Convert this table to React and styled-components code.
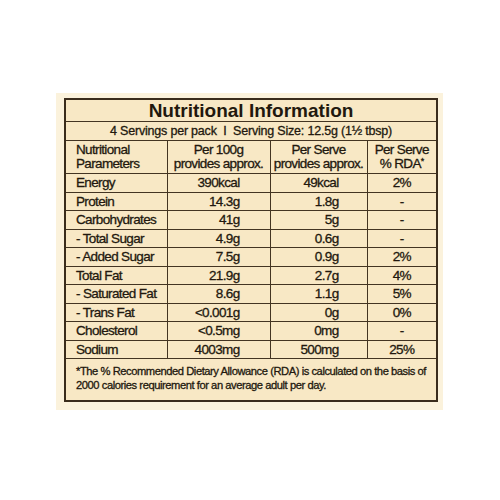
import React from "react";
import styled, { createGlobalStyle } from "styled-components";

const Global = createGlobalStyle`
  html, body { margin: 0; padding: 0; background: #ffffff; }
  body { font-family: "Liberation Sans", Arial, sans-serif; color: #22180e; }
`;

const Page = styled.div`
  width: 500px;
  height: 500px;
  padding: 93px 0 0 56px;
  box-sizing: border-box;
`;

const Halo = styled.div`
  display: inline-block;
  background: #fbf2dc;
  padding: 5px 5px 8px 8px;
`;

const Table = styled.table`
  border-collapse: collapse;
  width: 372px;
  table-layout: fixed;
  background: #f8e8c5;
  border: 2px solid #3a2c1c;
  font-size: 13.5px;
  letter-spacing: -0.65px;
  line-height: 1;
  -webkit-text-stroke: 0.3px #22180e;
`;

const Col = styled.col`
  width: ${(p) => p.$w}px;
`;

const Cell = styled.td`
  border: 1.6px solid #433422;
  padding: 0 ${(p) => p.$pr || 0}px 0 ${(p) => p.$pl || 0}px;
  height: ${(p) => p.$h || 17.5}px;
  text-align: ${(p) => p.$align || "left"};
  vertical-align: middle;
  white-space: nowrap;
  overflow: hidden;
`;

const Title = styled.td`
  border: 1.6px solid #433422;
  height: 21px;
  text-align: center;
  font-weight: 700;
  font-size: 19px;
  letter-spacing: 0;
  -webkit-text-stroke: 0;
  padding: 0;
`;

const Servings = styled.td`
  border: 1.6px solid #433422;
  height: 17.5px;
  text-align: center;
  font-size: 12.5px;
  letter-spacing: -0.2px;
  padding: 0;
`;

const HeadCell = styled(Cell)`
  line-height: 14px;
  padding-top: 1px;
`;

const Sup = styled.sup`
  font-size: 9px;
  vertical-align: 4px;
  line-height: 0;
`;

const Note = styled.td`
  border: 1.6px solid #433422;
  height: 37.5px;
  font-size: 11.2px;
  letter-spacing: -0.45px;
  line-height: 13.5px;
  padding: 1px 4px 2px 10px;
  vertical-align: middle;
  white-space: nowrap;
`;

const rows = [
  ["Energy", "390kcal", "49kcal", "2%"],
  ["Protein", "14.3g", "1.8g", "-"],
  ["Carbohydrates", "41g", "5g", "-"],
  ["- Total Sugar", "4.9g", "0.6g", "-"],
  ["- Added Sugar", "7.5g", "0.9g", "2%"],
  ["Total Fat", "21.9g", "2.7g", "4%"],
  ["- Saturated Fat", "8.6g", "1.1g", "5%"],
  ["- Trans Fat", "<0.001g", "0g", "0%"],
  ["Cholesterol", "<0.5mg", "0mg", "-"],
  ["Sodium", "4003mg", "500mg", "25%"],
];

export default function App() {
  return (
    <Page>
      <Global />
      <Halo>
        <Table>
          <colgroup>
            <Col $w={102} />
            <Col $w={103} />
            <Col $w={97} />
            <Col $w={70} />
          </colgroup>
          <tbody>
            <tr>
              <Title colSpan={4}>Nutritional Information</Title>
            </tr>
            <tr>
              <Servings colSpan={4}>
                4 Servings per pack&nbsp; I &nbsp;Serving Size: 12.5g (1½ tbsp)
              </Servings>
            </tr>
            <tr>
              <HeadCell $h={31.5} $pl={10}>
                Nutritional
                <br />
                Parameters
              </HeadCell>
              <HeadCell $h={31.5} $align="center">
                Per 100g
                <br />
                provides approx.
              </HeadCell>
              <HeadCell $h={31.5} $align="center">
                Per Serve
                <br />
                provides approx.
              </HeadCell>
              <HeadCell $h={31.5} $align="center">
                Per Serve
                <br />% RDA<Sup>*</Sup>
              </HeadCell>
            </tr>
            {rows.map((r) => (
              <tr key={r[0]}>
                <Cell $pl={10}>{r[0]}</Cell>
                <Cell $align="right" $pr={30}>
                  {r[1]}
                </Cell>
                <Cell $align="right" $pr={28}>
                  {r[2]}
                </Cell>
                <Cell $align="center">{r[3]}</Cell>
              </tr>
            ))}
            <tr>
              <Note colSpan={4}>
                *The % Recommended Dietary Allowance (RDA) is calculated on the basis of
                <br />
                2000 calories requirement for an average adult per day.
              </Note>
            </tr>
          </tbody>
        </Table>
      </Halo>
    </Page>
  );
}
